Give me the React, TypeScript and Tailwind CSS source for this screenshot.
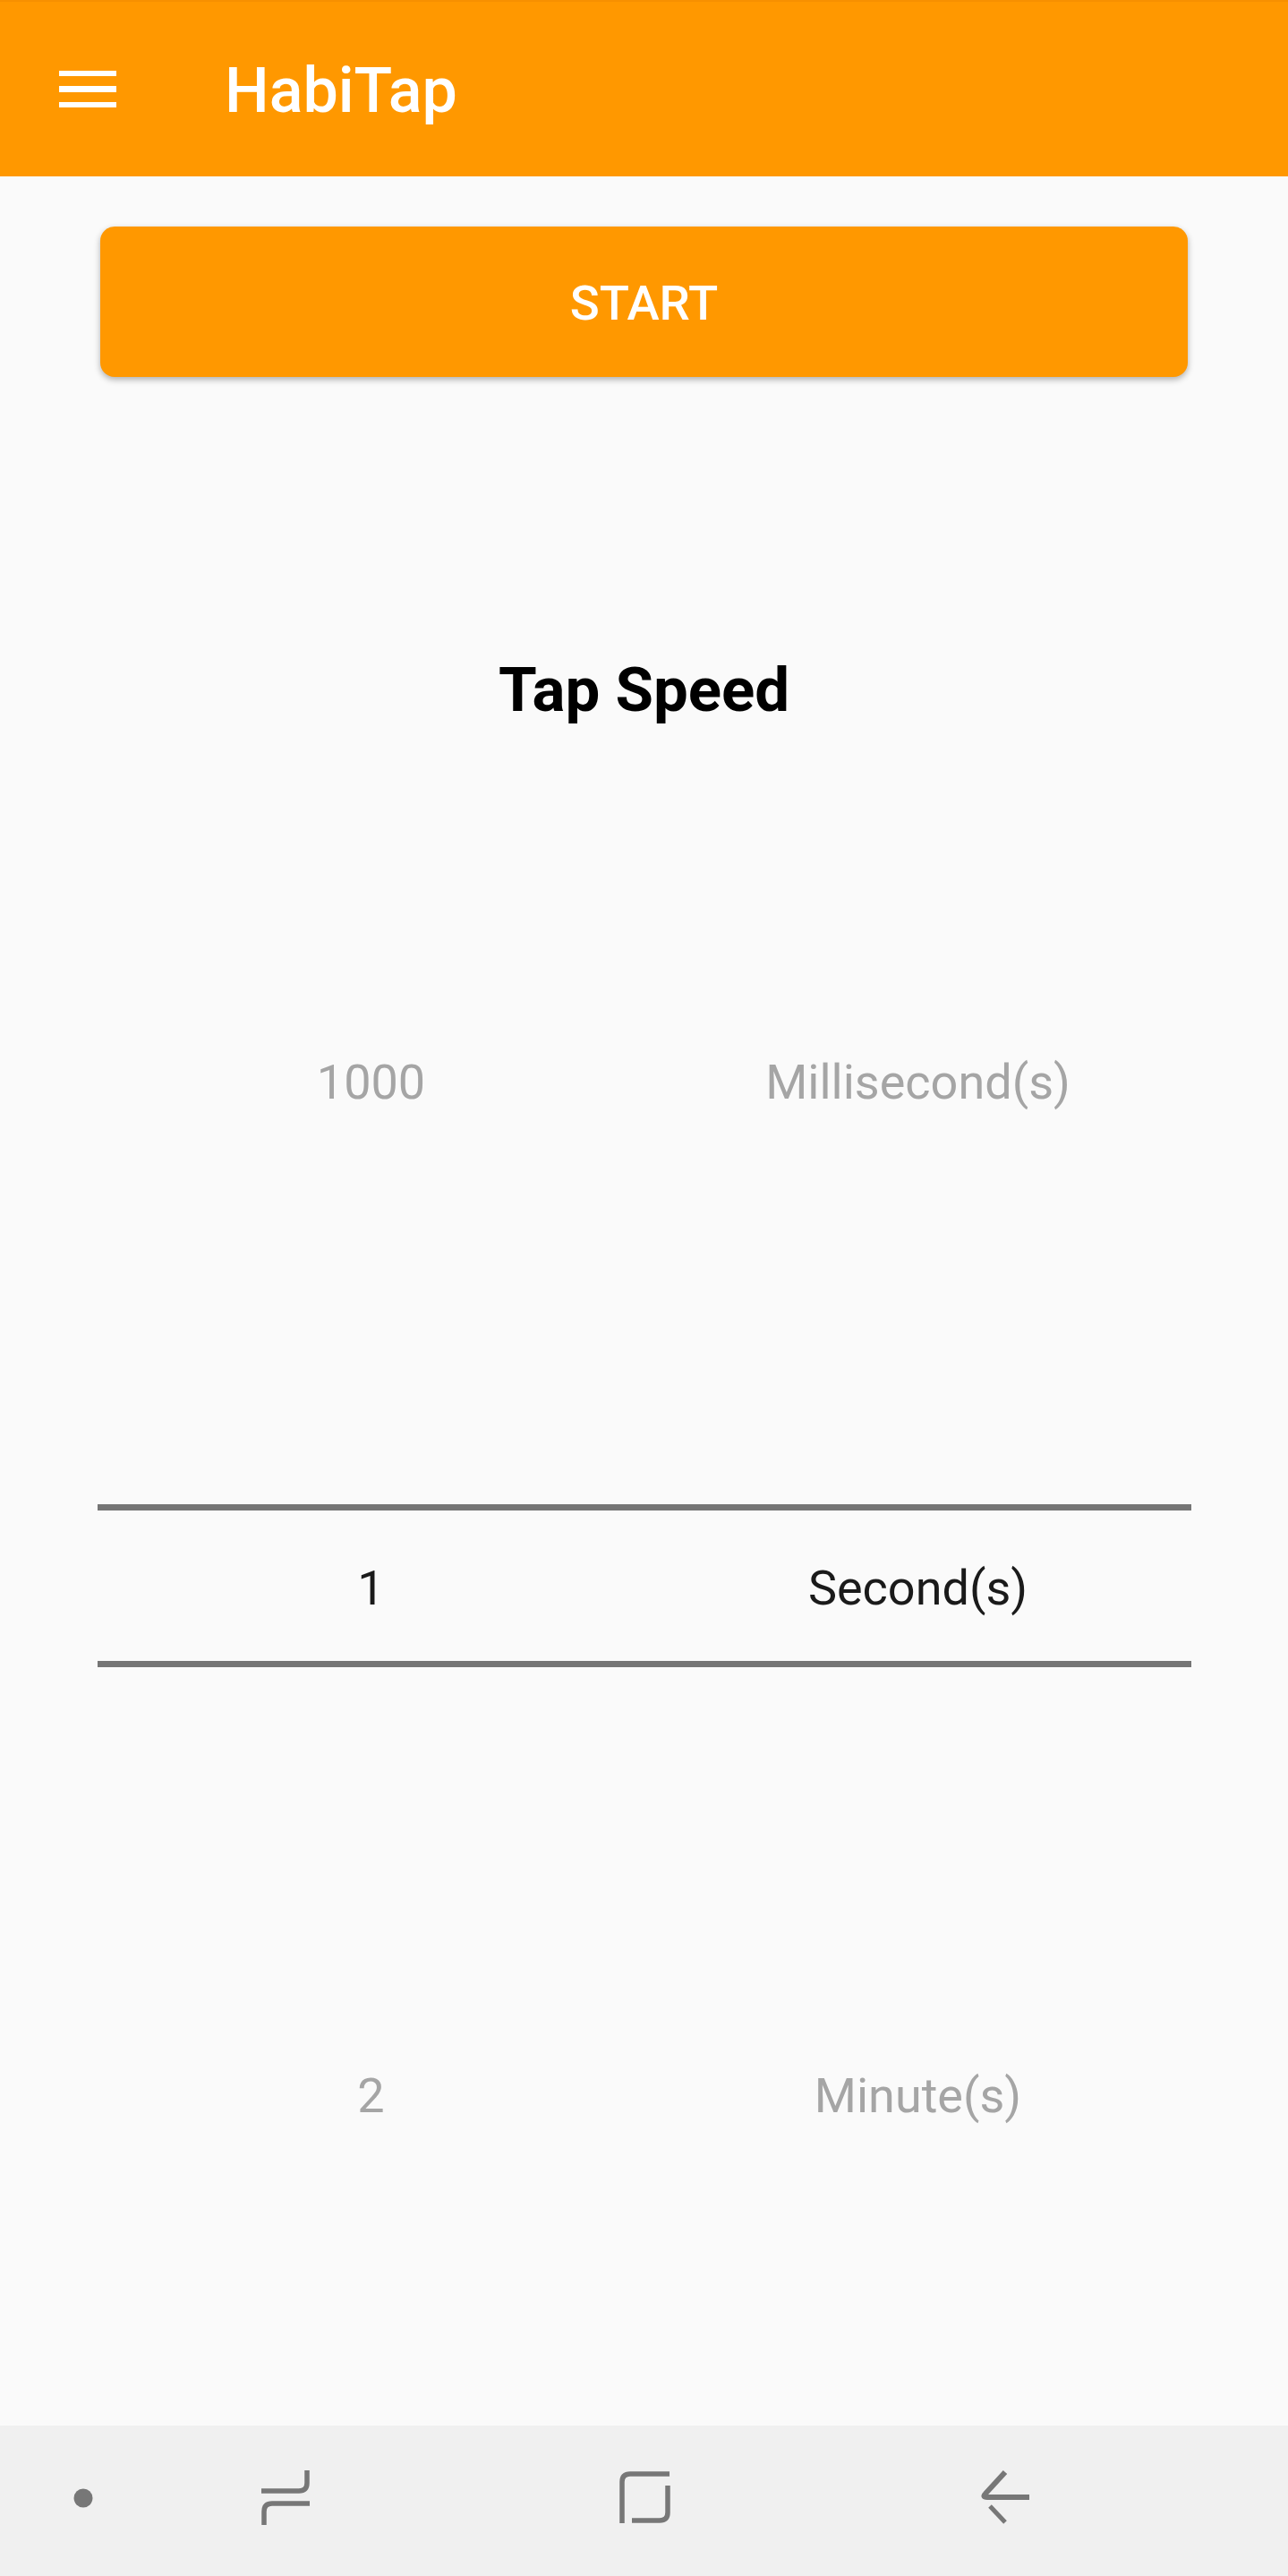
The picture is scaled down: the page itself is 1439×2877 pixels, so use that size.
import * as React from "react";

function PickerRow({ value, unit, className }: { value: string; unit: string; className: string }) {
  return (
    <div className={`mx-[109px] grid w-[1222px] grid-cols-2 items-center text-center text-[54px] ${className}`}>
      <span>{value}</span>
      <span>{unit}</span>
    </div>
  );
}

function NavBar() {
  return (
    <div className="flex h-[168px] items-center bg-[#f0f0f0]">
      <svg className="h-[168px] w-full" viewBox="0 2709 1439 168" fill="none" stroke="#777777" strokeWidth="5.5">
        <circle cx="93" cy="2790" r="10.5" fill="#777777" stroke="none" />
        <path d="M343 2759V2773Q343 2782 334 2782H292" />
        <path d="M346 2796H304Q295 2796 295 2805V2820" />
        <path d="M748 2763H704Q695 2763 695 2772V2818" />
        <path d="M746 2776V2806Q746 2815 737 2815H706" />
        <path d="M1123 2761L1101 2785Q1097 2789 1103 2789H1150" strokeWidth="6" />
        <path d="M1106 2799L1123 2817" strokeWidth="5" />
      </svg>
    </div>
  );
}

export default function App() {
  return (
    <div className="flex h-[2877px] w-[1439px] flex-col overflow-hidden bg-[#fafafa] font-['Roboto',sans-serif]">
      {/* Toolbar */}
      <header className="flex h-[197px] items-center border-t-2 border-[#f79000] bg-[#ff9800] pt-[3px] pl-[66px] text-white">
        <div className="-mt-[3px] flex w-[64px] flex-col gap-[11px]">
          <div className="h-[6.5px] bg-white" />
          <div className="h-[6.5px] bg-white" />
          <div className="h-[6.5px] bg-white" />
        </div>
        <span className="ml-[121px] text-[70px] font-medium">HabiTap</span>
      </header>

      <button className="mx-[112px] mt-[56px] h-[168px] rounded-[16px] bg-[#ff9800] pt-[4px] text-[54.5px] font-medium text-white shadow-[0_3px_7px_rgba(0,0,0,0.3)]">
        START
      </button>

      <h1 className="mt-[308px] text-center text-[69px] leading-[84px] font-bold text-black">Tap Speed</h1>

      {/* Wheel pickers */}
      <PickerRow value="1000" unit="Millisecond(s)" className="mt-[344px] h-[100px] pt-[2px] text-[#a5a5a5]" />
      <PickerRow
        value="1"
        unit="Second(s)"
        className="mt-[423px] h-[182px] border-y-[7px] border-[#757575] pt-[5px] text-[#1a1a1a]"
      />
      <PickerRow value="2" unit="Minute(s)" className="mt-[428px] h-[100px] text-[#a5a5a5]" />

      <div className="flex-1" />
      <NavBar />
    </div>
  );
}
